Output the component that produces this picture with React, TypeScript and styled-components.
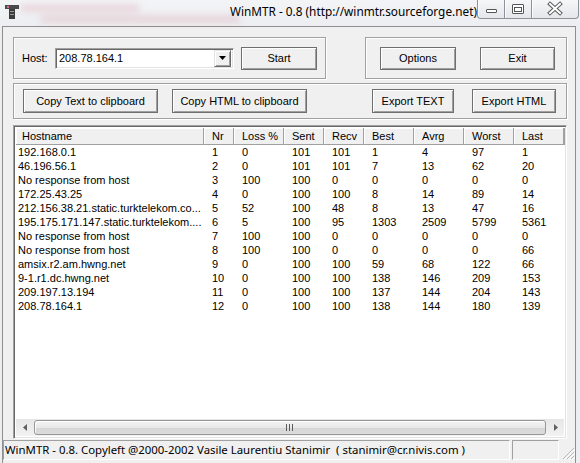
import React from 'react';
import styled, { createGlobalStyle } from 'styled-components';

const Global = createGlobalStyle`
  html, body { margin: 0; padding: 0; background: #eceef1; }
  body { width: 580px; height: 463px; overflow: hidden; }
  * { box-sizing: border-box; }
`;

const UI = `"Liberation Sans", Arial, sans-serif`;
const SEGOE = `"Noto Sans", "Open Sans", sans-serif`;

const Win = styled.div`
  width: 580px;
  height: 463px;
  background: #eceef1;
  display: flex;
  flex-direction: column;
  font-family: ${UI};
  font-size: 11px;
  color: #000;
  overflow: hidden;
`;

const TitleBar = styled.div`
  height: 26px;
  flex: none;
  position: relative;
  display: flex;
  align-items: flex-start;
  background: linear-gradient(#f3f4f6, #eceef1);
`;

const Blur = styled.div`
  position: absolute;
  height: 8px;
  border-radius: 4px;
  background: rgba(214, 150, 160, 0.28);
  filter: blur(3px);
`;

const AppIcon = styled.svg`
  margin: 5px 0 0 5px;
  flex: none;
  position: relative;
`;

const Title = styled.div`
  margin: 3px 0 0 211px;
  font-family: ${SEGOE};
  font-size: 11.8px;
  line-height: 16px;
  white-space: nowrap;
  position: relative;
`;

const Caption = styled.div`
  margin-left: auto;
  margin-right: 4px;
  display: flex;
  position: relative;
`;

const CapBtn = styled.div<{ $w: number; $first?: boolean; $last?: boolean }>`
  width: ${(p) => p.$w}px;
  height: 19px;
  border: 1px solid #8d9199;
  border-top: none;
  border-left: ${(p) => (p.$first ? '1px solid #8d9199' : 'none')};
  border-radius: ${(p) => (p.$first ? '0 0 0 4px' : p.$last ? '0 0 4px 0' : '0')};
  background: linear-gradient(#f6f7f8, #e4e6ea);
  box-shadow: inset 1px 0 rgba(255, 255, 255, 0.8);
  display: flex;
  align-items: center;
  justify-content: center;
`;

const Client = styled.div`
  flex: 1;
  margin: 0 4px 0 2px;
  border: 1px solid #8e8e8e;
  border-bottom: none;
  background: #f0f0f0;
  display: flex;
  flex-direction: column;
  padding-bottom: 4px;
`;

const Row = styled.div<{ $top: number; $h: number }>`
  margin-top: ${(p) => p.$top}px;
  height: ${(p) => p.$h}px;
  padding: 0 8px 0 10px;
  display: flex;
  justify-content: space-between;
  flex: none;
`;

const Group = styled.div<{ $w?: number; $pl: number; $pr?: number }>`
  width: ${(p) => (p.$w ? `${p.$w}px` : 'auto')};
  flex: ${(p) => (p.$w ? 'none' : '1')};
  height: 100%;
  border: 1px solid #a0a0a0;
  box-shadow: 1px 1px #fff, inset 1px 1px #fff;
  display: flex;
  align-items: center;
  padding-left: ${(p) => p.$pl}px;
  padding-right: ${(p) => p.$pr ?? 0}px;
`;

const Label = styled.span`
  width: 33px;
  flex: none;
`;

const Button = styled.div<{ $w: number; $h: number; $ml?: number; $auto?: boolean }>`
  width: ${(p) => p.$w}px;
  height: ${(p) => p.$h}px;
  flex: none;
  margin-left: ${(p) => (p.$auto ? 'auto' : `${p.$ml ?? 0}px`)};
  border: 1px solid #6f6f6f;
  background: #f0f0f0;
  box-shadow: inset 1px 1px #fff, inset -1px -1px #a0a0a0;
  display: flex;
  align-items: center;
  justify-content: center;
  white-space: nowrap;
`;

const Combo = styled.div`
  width: 179px;
  height: 21px;
  flex: none;
  border-top: 1px solid #a0a0a0;
  border-left: 1px solid #a0a0a0;
  border-bottom: 1px solid #fff;
  border-right: 1px solid #fff;
  box-shadow: inset 1px 1px #696969, inset -1px -1px #e3e3e3;
  background: #fff;
  display: flex;
  align-items: center;
  padding: 2px 2px 2px 3px;
`;

const ComboText = styled.span`
  flex: 1;
  white-space: nowrap;
`;

const DropBtn = styled.div`
  width: 17px;
  height: 17px;
  background: #f0f0f0;
  border-top: 1px solid #e3e3e3;
  border-left: 1px solid #e3e3e3;
  border-right: 1px solid #696969;
  border-bottom: 1px solid #696969;
  box-shadow: inset 1px 1px #fff, inset -1px -1px #a0a0a0;
  display: flex;
  align-items: center;
  justify-content: center;
`;

const List = styled.div`
  margin: 6px 8px 0 10px;
  height: 314px;
  flex: none;
  border-top: 1px solid #a0a0a0;
  border-left: 1px solid #a0a0a0;
  border-bottom: 1px solid #fff;
  border-right: 1px solid #fff;
  box-shadow: inset 1px 1px #696969, inset -1px -1px #e3e3e3;
  background: #fff;
  padding: 2px;
  display: flex;
  flex-direction: column;
`;

const COLS = '188px 30px 50px 40px 40px 50px 50px 50px 50px 1fr';

const Header = styled.div`
  display: grid;
  grid-template-columns: ${COLS};
  height: 17px;
  flex: none;
  background: #f0f0f0;
`;

const HCell = styled.div<{ $pl: number }>`
  height: 17px;
  line-height: 16px;
  padding-left: ${(p) => p.$pl}px;
  border-right: 1px solid #a0a0a0;
  border-bottom: 1px solid #a0a0a0;
  box-shadow: inset 1px 1px #fff;
  white-space: nowrap;
  overflow: hidden;
`;

const Body = styled.div`
  flex: 1;
  display: flex;
  flex-direction: column;
`;

const DataRow = styled.div`
  display: grid;
  grid-template-columns: ${COLS};
  height: 14px;
  line-height: 14px;
`;

const Cell = styled.div<{ $pl: number }>`
  padding-left: ${(p) => p.$pl}px;
  white-space: nowrap;
  overflow: hidden;
`;

const HScroll = styled.div`
  height: 17px;
  flex: none;
  display: flex;
  background: linear-gradient(#e6e6e6, #f2f2f2);
`;

const ScrollArrow = styled.div`
  width: 17px;
  height: 17px;
  flex: none;
  display: flex;
  align-items: center;
  justify-content: center;
`;

const Thumb = styled.div`
  flex: 1;
  margin: 1px 1px;
  border: 1px solid #979797;
  border-radius: 3px;
  background: linear-gradient(#f4f4f4, #e8e8e8 50%, #d6d6d6 51%, #dcdcdc);
  box-shadow: inset 1px 1px rgba(255, 255, 255, 0.9);
  display: flex;
  align-items: center;
  justify-content: center;
`;

const StatusBar = styled.div`
  height: 20px;
  flex: none;
  margin-top: 1px;
  display: flex;
  gap: 2px;
`;

const Panel = styled.div<{ $w?: number }>`
  width: ${(p) => (p.$w ? `${p.$w}px` : 'auto')};
  flex: ${(p) => (p.$w ? 'none' : '1')};
  height: 20px;
  border-top: 1px solid #a0a0a0;
  border-left: 1px solid #a0a0a0;
  border-bottom: 1px solid #fff;
  border-right: 1px solid #fff;
  font-family: ${SEGOE};
  font-size: 11.4px;
  line-height: 17px;
  padding-left: 1px;
  white-space: pre;
  overflow: hidden;
`;

const Grip = styled.svg`
  flex: none;
  align-self: flex-end;
`;

const rows: string[][] = [
  ['192.168.0.1', '1', '0', '101', '101', '1', '4', '97', '1'],
  ['46.196.56.1', '2', '0', '101', '101', '7', '13', '62', '20'],
  ['No response from host', '3', '100', '100', '0', '0', '0', '0', '0'],
  ['172.25.43.25', '4', '0', '100', '100', '8', '14', '89', '14'],
  ['212.156.38.21.static.turktelekom.co...', '5', '52', '100', '48', '8', '13', '47', '16'],
  ['195.175.171.147.static.turktelekom....', '6', '5', '100', '95', '1303', '2509', '5799', '5361'],
  ['No response from host', '7', '100', '100', '0', '0', '0', '0', '0'],
  ['No response from host', '8', '100', '100', '0', '0', '0', '0', '66'],
  ['amsix.r2.am.hwng.net', '9', '0', '100', '100', '59', '68', '122', '66'],
  ['9-1.r1.dc.hwng.net', '10', '0', '100', '100', '138', '146', '209', '153'],
  ['209.197.13.194', '11', '0', '100', '100', '137', '144', '204', '143'],
  ['208.78.164.1', '12', '0', '100', '100', '138', '144', '180', '139'],
];

const headers = ['Hostname', 'Nr', 'Loss %', 'Sent', 'Recv', 'Best', 'Avrg', 'Worst', 'Last'];

export default function App() {
  return (
    <>
      <Global />
      <Win>
        <TitleBar>
          <Blur style={{ left: 20, top: 4, width: 120 }} />
          <Blur style={{ left: 40, top: 15, width: 200 }} />
          <AppIcon width="14" height="14" viewBox="0 0 14 14">
            <rect x="0" y="0" width="14" height="4" fill="#4a4a4a" />
            <rect x="2" y="1" width="2" height="2" fill="#e06a8a" />
            <rect x="4" y="4" width="6" height="10" fill="#3c3c3c" />
            <rect x="5" y="6" width="4" height="1" fill="#9a9a9a" />
            <rect x="5" y="9" width="4" height="1" fill="#9a9a9a" />
          </AppIcon>
          <Title>WinMTR - 0.8 (http://winmtr.sourceforge.net)</Title>
          <Caption>
            <CapBtn $w={28} $first>
              <svg width="26" height="18" viewBox="0 0 26 18">
                <rect x="8.5" y="9.5" width="10" height="3" rx="0.5" fill="#fff" stroke="#555" />
              </svg>
            </CapBtn>
            <CapBtn $w={27}>
              <svg width="26" height="18" viewBox="0 0 26 18">
                <rect x="7.5" y="4.5" width="11" height="9" rx="0.5" fill="#fff" stroke="#555" />
                <rect x="9.5" y="7.5" width="7" height="4" fill="none" stroke="#555" />
              </svg>
            </CapBtn>
            <CapBtn $w={47} $last>
              <svg width="46" height="18" viewBox="0 0 46 18">
                <path d="M18 4 L28 13 M28 4 L18 13" stroke="#5c5c5c" strokeWidth="4" strokeLinecap="square" />
                <path d="M18 4 L28 13 M28 4 L18 13" stroke="#fff" strokeWidth="2" strokeLinecap="square" />
              </svg>
            </CapBtn>
          </Caption>
        </TitleBar>
        <Client>
          <Row $top={10} $h={42}>
            <Group $w={313} $pl={8}>
              <Label>Host:</Label>
              <Combo>
                <ComboText>208.78.164.1</ComboText>
                <DropBtn>
                  <svg width="7" height="4" viewBox="0 0 7 4">
                    <path d="M0 0 H7 L3.5 4 Z" fill="#000" />
                  </svg>
                </DropBtn>
              </Combo>
              <Button $w={76} $h={23} $ml={7}>Start</Button>
            </Group>
            <Group $w={202} $pl={14}>
              <Button $w={76} $h={23}>Options</Button>
              <Button $w={75} $h={23} $ml={24}>Exit</Button>
            </Group>
          </Row>
          <Row $top={4} $h={36}>
            <Group $pl={9} $pr={10}>
              <Button $w={135} $h={24}>Copy Text to clipboard</Button>
              <Button $w={135} $h={24} $ml={14}>Copy HTML to clipboard</Button>
              <Button $w={82} $h={24} $auto>Export TEXT</Button>
              <Button $w={84} $h={24} $ml={18}>Export HTML</Button>
            </Group>
          </Row>
          <List>
            <Header>
              {headers.map((h, i) => (
                <HCell key={h} $pl={i === 0 ? 6 : 8}>{h}</HCell>
              ))}
              <HCell $pl={0} />
            </Header>
            <Body>
              {rows.map((r, ri) => (
                <DataRow key={ri}>
                  {r.map((c, ci) => (
                    <Cell key={ci} $pl={ci === 0 ? 2 : 8}>{c}</Cell>
                  ))}
                  <Cell $pl={0} />
                </DataRow>
              ))}
            </Body>
            <HScroll>
              <ScrollArrow>
                <svg width="4" height="7" viewBox="0 0 4 7">
                  <path d="M4 0 V7 L0 3.5 Z" fill="#606060" />
                </svg>
              </ScrollArrow>
              <Thumb>
                <svg width="8" height="7" viewBox="0 0 8 7">
                  <rect x="0" y="0" width="1" height="7" fill="#5c5c5c" />
                  <rect x="3" y="0" width="1" height="7" fill="#5c5c5c" />
                  <rect x="6" y="0" width="1" height="7" fill="#5c5c5c" />
                </svg>
              </Thumb>
              <ScrollArrow>
                <svg width="4" height="7" viewBox="0 0 4 7">
                  <path d="M0 0 V7 L4 3.5 Z" fill="#606060" />
                </svg>
              </ScrollArrow>
            </HScroll>
          </List>
          <StatusBar>
            <Panel>WinMTR - 0.8. Copyleft @2000-2002 Vasile Laurentiu Stanimir  ( stanimir@cr.nivis.com )</Panel>
            <Panel $w={47} />
            <Grip width="14" height="14" viewBox="0 0 14 14">
              <path d="M13 2 L2 13 M13 6 L6 13 M13 10 L10 13" stroke="#b8b8b8" strokeWidth="1" />
              <path d="M14 3 L3 14 M14 7 L7 14 M14 11 L11 14" stroke="#fff" strokeWidth="1" />
            </Grip>
          </StatusBar>
        </Client>
      </Win>
    </>
  );
}
